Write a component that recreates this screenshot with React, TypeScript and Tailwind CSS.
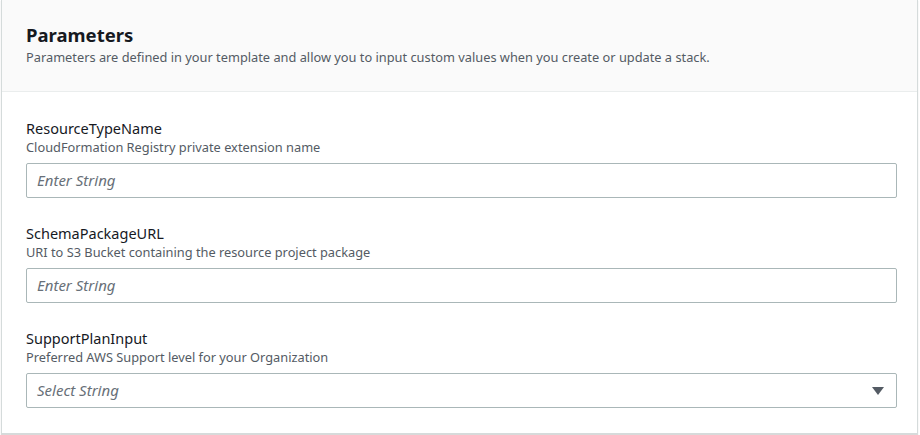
export default function App() {
  const field = (label: string, desc: string, ph: string, select = false) => (
    <div className="flex flex-col">
      <div className="text-[14.5px] leading-[20px] text-[#16191f]">{label}</div>
      <div className="text-[12.8px] leading-[18px] text-[#545b64]">{desc}</div>
      <div className="mt-[7px] h-[35px] border border-[#aab7b8] rounded-[2px] bg-white flex items-center px-[10px] justify-between">
        <span className="italic text-[15px] text-[#687078]">{ph}</span>
        {select && (
          <svg width="12" height="8" viewBox="0 0 12 8" className="mr-[2px]">
            <path d="M0 0 H12 L6 8 Z" fill="#545b64" />
          </svg>
        )}
      </div>
    </div>
  );
  return (
    <div className="w-[920px] h-[435px] bg-white" style={{ fontFamily: '"Noto Sans", "Open Sans", sans-serif' }}>
      <div className="ml-[1px] w-[917px] h-[434px] border-l border-r border-b border-[#d5dbdb] shadow-[0_1px_1px_rgba(0,0,0,0.15)]">
        <div className="h-[92px] bg-[#fafafa] border-b border-[#eaeded] px-[24px] pt-[23px]">
          <div className="text-[18.5px] leading-[24px] font-bold text-[#16191f]">Parameters</div>
          <div className="text-[12.8px] leading-[18px] text-[#545b64] mt-[1px]">
            Parameters are defined in your template and allow you to input custom values when you create or update a stack.
          </div>
        </div>
        <div className="px-[24px] pt-[26px] flex flex-col gap-[25px] pr-[20px]">
          {field("ResourceTypeName", "CloudFormation Registry private extension name", "Enter String")}
          {field("SchemaPackageURL", "URI to S3 Bucket containing the resource project package", "Enter String")}
          {field("SupportPlanInput", "Preferred AWS Support level for your Organization", "Select String", true)}
        </div>
      </div>
    </div>
  );
}
